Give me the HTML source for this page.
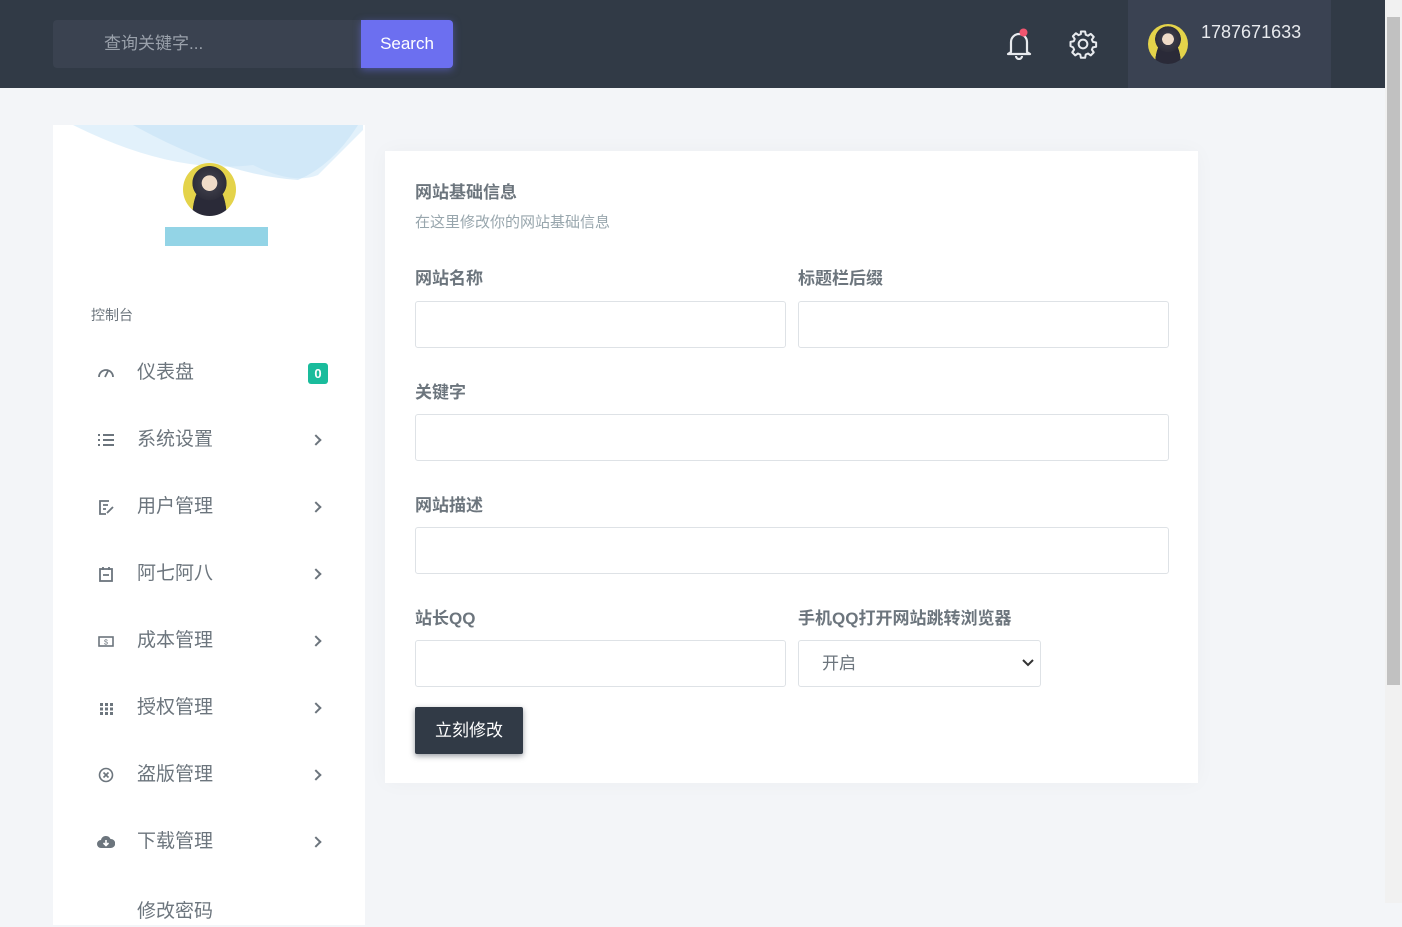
<!DOCTYPE html>
<html><head><meta charset="utf-8"><style>
*{box-sizing:border-box;margin:0;padding:0}
body{width:1402px;height:903px;overflow:hidden;background:#f3f5f8;font-family:"Liberation Sans","Noto Sans CJK SC",sans-serif;position:relative}
.hdr{position:absolute;left:0;top:0;width:1385px;height:88px;background:#313a46}
.search{position:absolute;left:53px;top:20px;width:308px;height:48px;background:#3a4250;border-radius:4px 0 0 4px;color:#9aa1ab;font-size:17px;line-height:48px;padding-left:51px}
.sbtn{position:absolute;left:361px;top:20px;width:92px;height:48px;background:#6c6ff0;color:#fff;font-size:17px;line-height:48px;text-align:center;border-radius:0 4px 4px 0;box-shadow:0 2px 8px rgba(108,111,240,.5)}
.user{position:absolute;left:1128px;top:0;width:203px;height:88px;background:#3a4252}
.av{border-radius:50%;background:radial-gradient(circle at 50% 38%,#f0dcc8 0 18%,#3a3a46 19%,#2e2e3a 40%,transparent 41%),radial-gradient(ellipse at 50% 100%,#2a2a38 0 45%,#e4d34a 46%)}
.sb{position:absolute;left:1385px;top:0;width:17px;height:903px;background:#f1f1f1}
.sbt{position:absolute;left:1387px;top:17px;width:13px;height:668px;background:#c1c1c1}
.side{position:absolute;left:53px;top:125px;width:312px;height:800px;background:#fff}
.item{position:absolute;left:0;width:312px;height:30px;font-size:19px;color:#6c757d}
.item .t{position:absolute;left:84px;top:0;line-height:30px}
.item .ic{position:absolute;left:44px;top:6px;width:18px;height:18px}
.item .ch{position:absolute;left:259px;top:11px;width:8px;height:8px;border-right:2px solid #6c757d;border-top:2px solid #6c757d;transform:rotate(45deg)}
.card{position:absolute;left:385px;top:151px;width:813px;height:632px;background:#fff;box-shadow:0 0 20px rgba(0,0,0,.03)}
.lbl{position:absolute;font-size:17px;font-weight:bold;color:#6c757d}
.inp{position:absolute;height:47px;border:1px solid #dee2e6;border-radius:3px;background:#fff}
</style></head><body>
<div class="hdr">
<div class="search">查询关键字...</div><div class="sbtn">Search</div>
<svg style="position:absolute;left:1004px;top:28px" width="30" height="32" viewBox="0 0 30 32"><path d="M7 24V14a8 8 0 0116 0v10l3 2H4z" fill="none" stroke="#e8eaee" stroke-width="2.2" stroke-linejoin="round"/><path d="M12 28a3 3 0 006 0" fill="none" stroke="#e8eaee" stroke-width="2.2"/><circle cx="19.5" cy="4.5" r="4" fill="#f0556f"/></svg>
<svg style="position:absolute;left:1068px;top:29px" width="30" height="30" viewBox="0 0 24 24"><path d="M10.3 2h3.4l.5 2.6 1.8.8 2.2-1.5 2.4 2.4-1.5 2.2.8 1.8 2.6.5v3.4l-2.6.5-.8 1.8 1.5 2.2-2.4 2.4-2.2-1.5-1.8.8-.5 2.6h-3.4l-.5-2.6-1.8-.8-2.2 1.5-2.4-2.4 1.5-2.2-.8-1.8L2 13.7v-3.4l2.6-.5.8-1.8-1.5-2.2 2.4-2.4 2.2 1.5 1.8-.8z" fill="none" stroke="#e8eaee" stroke-width="1.6" stroke-linejoin="round"/><circle cx="12" cy="12" r="3.5" fill="none" stroke="#e8eaee" stroke-width="1.6"/></svg>
<div class="user"><div class="av" style="position:absolute;left:20px;top:24px;width:40px;height:40px"></div><div style="position:absolute;left:73px;top:22px;color:#e8eaee;font-size:18px">1787671633</div></div>
</div>
<div class="side">
<svg style="position:absolute;left:0;top:0" width="312" height="60"><path d="M20 0 Q120 50 200 40 Q240 60 265 50 L310 5 L310 0Z" fill="#dbeefa" opacity=".8"/><path d="M80 0 Q170 50 245 55 Q280 40 305 0Z" fill="#c6e3f7" opacity=".6"/></svg>
<div class="av" style="position:absolute;left:130px;top:38px;width:53px;height:53px"></div>
<div style="position:absolute;left:112px;top:102px;width:103px;height:19px;background:#93d4e6"></div>
<div style="position:absolute;left:38px;top:180px;font-size:14px;color:#6c757d">控制台</div>
<div class="item" style="top:233px"><svg class="ic" viewBox="0 0 18 18"><path d="M2 13a7 7 0 0114 0M8 13l3-6" fill="none" stroke="#6c757d" stroke-width="1.8"/></svg><span class="t">仪表盘</span><div style="position:absolute;left:255px;top:5px;width:20px;height:21px;background:#1abc9c;border-radius:3px;color:#fff;font-size:13px;font-weight:bold;text-align:center;line-height:21px">0</div></div>
<div class="item" style="top:300px"><svg class="ic" viewBox="0 0 18 18"><path d="M1 4h2M6 4h11M1 9h2M6 9h11M1 14h2M6 14h11" stroke="#6c757d" stroke-width="2"/></svg><span class="t">系统设置</span><i class="ch"></i></div>
<div class="item" style="top:367px"><svg class="ic" viewBox="0 0 18 18"><path d="M12 3H3v13h6M6 7h5M6 11h3M10 15l6-6" fill="none" stroke="#6c757d" stroke-width="1.8"/></svg><span class="t">用户管理</span><i class="ch"></i></div>
<div class="item" style="top:434px"><svg class="ic" viewBox="0 0 18 18"><rect x="3" y="4" width="12" height="12" fill="none" stroke="#6c757d" stroke-width="1.8"/><path d="M6 2v3M12 2v3M6 10h6" stroke="#6c757d" stroke-width="1.8"/></svg><span class="t">阿七阿八</span><i class="ch"></i></div>
<div class="item" style="top:501px"><svg class="ic" viewBox="0 0 18 18"><rect x="2" y="5" width="14" height="9" fill="none" stroke="#6c757d" stroke-width="1.6"/><text x="9" y="12.5" font-size="7" text-anchor="middle" fill="#6c757d">$</text></svg><span class="t">成本管理</span><i class="ch"></i></div>
<div class="item" style="top:568px"><svg class="ic" viewBox="0 0 18 18"><path d="M3 4h3v3H3zM8 4h3v3H8zM13 4h3v3h-3zM3 8.5h3v3H3zM8 8.5h3v3H8zM13 8.5h3v3h-3zM3 13h3v3H3zM8 13h3v3H8zM13 13h3v3h-3z" fill="#6c757d"/></svg><span class="t">授权管理</span><i class="ch"></i></div>
<div class="item" style="top:635px"><svg class="ic" viewBox="0 0 18 18"><circle cx="9" cy="9" r="6.5" fill="none" stroke="#6c757d" stroke-width="1.6"/><path d="M6.5 6.5l5 5M11.5 6.5l-5 5" stroke="#6c757d" stroke-width="1.6"/></svg><span class="t">盗版管理</span><i class="ch"></i></div>
<div class="item" style="top:702px"><svg class="ic" viewBox="0 0 18 18"><path d="M4 15a4 4 0 010-8 5 5 0 019.5-1A4 4 0 0114 15z" fill="#6c757d"/><path d="M9 7v5M6.5 10L9 12.5 11.5 10" fill="none" stroke="#fff" stroke-width="1.6"/></svg><span class="t">下载管理</span><i class="ch"></i></div>
<div class="item" style="top:772px"><span class="t">修改密码</span></div>
</div>
<div class="card">
<div class="lbl" style="left:30px;top:27px">网站基础信息</div>
<div style="position:absolute;left:30px;top:60px;font-size:15px;color:#98a6ad">在这里修改你的网站基础信息</div>
<div class="lbl" style="left:30px;top:113px">网站名称</div><div class="lbl" style="left:413px;top:113px">标题栏后缀</div>
<div class="inp" style="left:30px;top:150px;width:371px"></div><div class="inp" style="left:413px;top:150px;width:371px"></div>
<div class="lbl" style="left:30px;top:227px">关键字</div>
<div class="inp" style="left:30px;top:263px;width:754px"></div>
<div class="lbl" style="left:30px;top:340px">网站描述</div>
<div class="inp" style="left:30px;top:376px;width:754px"></div>
<div class="lbl" style="left:30px;top:453px">站长QQ</div><div class="lbl" style="left:413px;top:453px">手机QQ打开网站跳转浏览器</div>
<div class="inp" style="left:30px;top:489px;width:371px"></div>
<div class="inp" style="left:413px;top:489px;width:243px;font-size:17px;color:#6c757d;line-height:45px;padding-left:23px">开启<svg style="position:absolute;right:6px;top:17px" width="12" height="10"><path d="M1 2l5 5 5-5" fill="none" stroke="#333" stroke-width="2"/></svg></div>
<div style="position:absolute;left:30px;top:556px;width:108px;height:47px;background:#313a46;color:#fff;font-size:17px;line-height:47px;text-align:center;border-radius:2px;box-shadow:0 2px 6px rgba(49,58,70,.5)">立刻修改</div>
</div>
<div class="sb"></div><div class="sbt"></div>
</body></html>
